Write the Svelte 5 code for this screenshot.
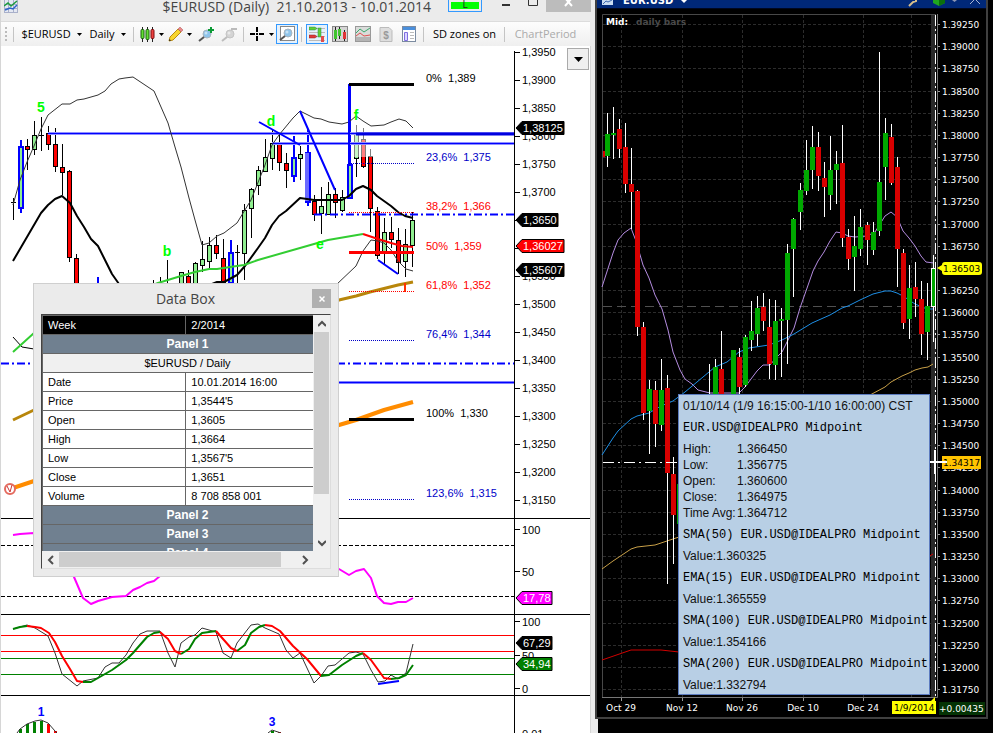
<script>
  // [slot, body top, body bottom, high, low, kind] - one slot each 7px, starting at x = 13
  const daily = [
    [0, 202, 203, 198, 220, 'k'], [1, 146, 207, 140, 213, 'b'], [2, 146, 149, 139, 170, 'r'],
    [3, 135, 149, 121, 155, 'g'], [4, 135, 136, 117, 151, 'k'], [5, 133, 144, 126, 150, 'r'],
    [6, 144, 166, 128, 172, 'r'], [7, 167, 172, 144, 195, 'r'], [8, 171, 257, 170, 262, 'r'],
    [9, 258, 300, 254, 304, 'r'], [12, 290, 310, 277, 320, 'b'], [20, 300, 301, 280, 320, 'k'],
    [21, 300, 301, 277, 320, 'k'], [22, 300, 301, 260, 320, 'k'], [24, 272, 300, 272, 300, 'g'],
    [25, 276, 300, 270, 300, 'r'], [26, 263, 300, 262, 300, 'g'], [27, 259, 265, 241, 272, 'g'],
    [28, 245, 261, 237, 268, 'g'], [29, 245, 253, 235, 259, 'r'], [30, 258, 290, 239, 295, 'r'],
    [31, 252, 282, 240, 290, 'b'], [32, 252, 253, 245, 284, 'k'], [33, 210, 253, 204, 280, 'g'],
    [34, 189, 208, 188, 238, 'g'], [35, 170, 185, 166, 195, 'g'], [36, 157, 171, 139, 172, 'g'],
    [37, 143, 158, 130, 170, 'g'], [38, 144, 162, 135, 171, 'r'], [39, 163, 170, 153, 188, 'r'],
    [40, 157, 175, 136, 182, 'b'], [41, 154, 158, 146, 180, 'g'], [42, 152, 201, 129, 206, 'b'],
    [43, 201, 214, 195, 221, 'r'], [44, 206, 213, 187, 234, 'g'], [45, 194, 214, 182, 214, 'g'],
    [46, 194, 202, 188, 218, 'r'], [47, 197, 210, 190, 212, 'g'], [48, 164, 197, 84, 199, 'b'],
    [49, 134, 158, 125, 177, 'g'], [50, 139, 166, 128, 168, 'r'], [51, 156, 208, 149, 232, 'r'],
    [52, 211, 255, 207, 259, 'r'], [53, 232, 251, 218, 264, 'g'], [54, 232, 239, 217, 248, 'r'],
    [55, 240, 262, 228, 274, 'r'], [56, 244, 261, 229, 277, 'g'], [57, 220, 245, 212, 267, 'g']
  ];
  const bodyFill = { r: '#ff0000', g: '#8fee8f', b: '#8fee8f', k: '#000' };

  const covered = ['1,3650', '1,3600'];
  const priceAxis = Array.from({ length: 17 }, (_, i) => ({
    y: Math.round(51.5 + i * 28.06),
    label: '1,' + (3950 - i * 50)
  }));

  const fib = [
    { pct: '0%', price: '1,389', y: 84, ty: 82, c: '#000', solid: true },
    { pct: '23,6%', price: '1,375', y: 163, ty: 161, c: '#0000c8' },
    { pct: '38,2%', price: '1,366', y: 212, ty: 210, c: '#ff0000' },
    { pct: '50%', price: '1,359', y: 252, ty: 250, c: '#ff0000', solid: true },
    { pct: '61,8%', price: '1,352', y: 291, ty: 289, c: '#ff0000' },
    { pct: '76,4%', price: '1,344', y: 340, ty: 338, c: '#0000c8' },
    { pct: '100%', price: '1,330', y: 419, ty: 417, c: '#000', solid: true },
    { pct: '123,6%', price: '1,315', y: 499, ty: 497, c: '#0000c8' }
  ];

  const tags = [
    { t: '1,38125', y: 128, w: 48, c: '#000' }, { t: '1,3650', y: 220, w: 42, c: '#000' },
    { t: '1,36027', y: 246, w: 48, c: '#ff0000' }, { t: '1,35607', y: 270, w: 48, c: '#000' },
    { t: '17,78', y: 598, w: 36, c: '#ff00ff' }, { t: '67,29', y: 643, w: 36, c: '#000' },
    { t: '34,94', y: 664, w: 36, c: '#008000' }
  ];

  const waves = [
    ['5', 41, 112], ['d', 271, 126], ['f', 356, 120], ['b', 167, 256], ['e', 320, 249]
  ];

  const signal = [
    ['g', '13,629 20,627 27,626'],
    ['r', '27,626 35,627 41,628 49,633 55,642 62,656 70,669 77,681 83,682'],
    ['g', '83,682 91,682 98,678 112,670 119,665 126,660 133,653 147,637 154,633 160,632'],
    ['r', '160,632 168,639 175,651 181,654'],
    ['g', '181,654 189,649 195,639 202,633 209,632 216,631'],
    ['r', '216,631 231,648 237,651'],
    ['g', '237,651 245,645 251,633 259,627 265,625'],
    ['r', '265,625 272,626 280,631 293,646 307,659 321,676'],
    ['g', '321,676 329,675 342,665 356,656 363,653'],
    ['r', '363,653 371,660 384,678 391,679'],
    ['g', '391,679 399,678 406,675 413,665']
  ];

  const histogram = [[20, 729, 'g'], [27, 724, 'g'], [34, 722, 'g'], [41, 721, 'g'], [48, 724, 'r'], [55, 731, 'r'], [272, 731, 'g'], [279, 732, 'r']];

  // [x, body top, body bottom, high, low, up]
  const mid = [
    [607, 134, 156, 113, 167, 1], [613, 133, 135, 107, 159, 1], [619, 129, 149, 119, 158, 0],
    [625, 147, 184, 123, 193, 0], [631, 184, 192, 148, 229, 0], [637, 191, 327, 190, 336, 0],
    [643, 327, 413, 322, 420, 0], [649, 389, 411, 380, 454, 1], [655, 390, 424, 381, 447, 0],
    [661, 390, 425, 359, 431, 1], [667, 388, 473, 375, 584, 0], [673, 474, 515, 457, 564, 0],
    [679, 484, 524, 484, 524, 1], [709, 400, 420, 364, 430, 1], [715, 367, 400, 359, 410, 1],
    [721, 369, 410, 331, 420, 0], [733, 350, 400, 350, 410, 1], [739, 357, 387, 348, 400, 0],
    [745, 337, 385, 335, 387, 1], [751, 331, 340, 301, 351, 1], [757, 308, 334, 296, 346, 1],
    [763, 307, 321, 293, 331, 0], [769, 327, 364, 299, 379, 0], [775, 321, 365, 300, 380, 1],
    [781, 319, 321, 308, 377, 1], [787, 253, 320, 244, 364, 1], [793, 219, 249, 218, 297, 1],
    [800, 190, 212, 183, 230, 1], [806, 170, 191, 140, 195, 1], [812, 147, 170, 126, 189, 1],
    [818, 147, 176, 132, 191, 0], [824, 178, 187, 162, 217, 0], [830, 170, 195, 136, 210, 1],
    [836, 164, 170, 151, 204, 1], [842, 163, 238, 125, 247, 0], [848, 237, 259, 229, 270, 0],
    [854, 246, 257, 216, 291, 1], [860, 227, 249, 209, 256, 1], [867, 225, 240, 222, 265, 0],
    [873, 232, 250, 222, 255, 1], [879, 182, 231, 52, 236, 1], [885, 133, 167, 118, 200, 1],
    [891, 137, 183, 124, 185, 0], [897, 167, 249, 157, 287, 0], [903, 253, 323, 249, 329, 0],
    [909, 288, 319, 265, 339, 1], [915, 287, 299, 262, 317, 0], [921, 299, 334, 281, 355, 0],
    [927, 306, 332, 283, 360, 1]
  ];
  const midAxis = Array.from({ length: 31 }, (_, i) => ({
    y: Math.round(24 + i * 22.17),
    label: (1.3925 - i * 0.0025).toFixed(5)
  })).filter((a) => a.label !== '1.36500');
  const midDates = [[621, 'Oct 29'], [682, 'Nov 12'], [742, 'Nov 26'], [803, 'Dec 10'], [863, 'Dec 24']];

  const rows = [
    ['Date', '10.01.2014 16:00'], ['Price', "1,3544'5"], ['Open', '1,3605'], ['High', '1,3664'],
    ['Low', "1,3567'5"], ['Close', '1,3651'], ['Volume', '8 708 858 001']
  ];
  const quote = [
    ['High:', '1.366450'], ['Low:', '1.356775'], ['Open:', '1.360600'],
    ['Close:', '1.364975'], ['Time Avg:', '1.364712']
  ];
  const studies = [
    ['SMA(50)', '1.360325'], ['EMA(15)', '1.365559'], ['SMA(100)', '1.354166'], ['SMA(200)', '1.332794']
  ];
</script>

{#snippet caret()}
  <svg class="caret" width="5" height="3" viewBox="0 0 5 3"><path d="M0 0h5L2.500 3z" fill="#000" /></svg>
{/snippet}

{#snippet lens(grey)}
  <circle cx="9" cy="7" r="4" fill={grey ? '#d4d4d4' : '#8fc4ea'} stroke={grey ? '#c4c4c4' : '#a9b4be'} />
  <circle cx="8" cy="6" r="1.500" fill="#fff" opacity=".5" />
  <path d="M6 10L1 14" stroke={grey ? '#bdbdbd' : '#555'} stroke-width="2" />
{/snippet}

<main class="desktop">
  <section class="trader">
    <header class="titlebar">
      <svg class="app" width="14" height="13" viewBox="0 0 14 13">
        <path d="M0 0h14v13H0z" fill="#e4e8f2" /><path d="M0 12.500h14M.5 0v13M13.500 0v13M0 8.500h14M0 4.500h14M4.500 0v13M9.500 0v13" stroke="#a9b0ca" />
        <path d="M0 6l4-3 3 3 6-5" stroke="#1c9b3c" stroke-width="1.500" fill="none" /><path d="M1 10l5-2 3 1 4-4" stroke="#2b63c9" stroke-width="1.500" fill="none" />
      </svg>
      <h1>$EURUSD (Daily)&nbsp; 21.10.2013 - 10.01.2014</h1>
      <button class="link">L</button>
      <button class="sys" aria-label="Minimize"><svg width="8" height="13"><path d="M0 5h8" stroke="#333" stroke-width="2" /></svg></button>
      <button class="sys" aria-label="Maximize"><svg width="10" height="13"><path d="M.5-2v7.500h9V-2" stroke="#333" fill="none" /></svg></button>
      <button class="close" aria-label="Close"><svg width="9" height="12"><path d="M1-2l7 8M8-2L1 6" stroke="#fff" stroke-width="2" /></svg></button>
    </header>

    <nav class="toolbar">
      <span class="grip"></span>
      <i></i>
      <button class="symbol">$EURUSD {@render caret()}</button>
      <button class="period">Daily {@render caret()}</button>
      <i></i>
      <button class="drop" aria-label="Chart type">
        <svg width="15" height="15" viewBox="0 0 15 15"><path d="M2.500 0v15M7.500 0v15M12.500 0v15" stroke="#222" /><rect x="1" y="2.500" width="3" height="9" rx="1" fill="#63e032" stroke="#185c0c" /><rect x="6" y="2.500" width="3" height="10" rx="1" fill="#63e032" stroke="#185c0c" /><rect x="11" y="2.500" width="3" height="9" rx="1" fill="#ee4040" stroke="#7b0e0e" /></svg>
        {@render caret()}
      </button>
      <button class="drop" aria-label="Draw">
        <svg width="15" height="15" viewBox="0 0 15 15"><path d="M1 14l1-4 8-8 3 3-8 8z" fill="#f8d52c" stroke="#b98a12" /><path d="M10 2l2-2 3 3-2 2z" fill="#e9888a" stroke="#a55" stroke-width=".5" /><path d="M1 14l.5-2 1.500 1.500z" fill="#222" /></svg>
        {@render caret()}
      </button>
      <button class="tool" aria-label="Zoom in"><svg width="16" height="15" viewBox="0 0 16 15">{@render lens(false)}<path d="M13 0v6M10 3h6" stroke="#0b9a35" stroke-width="2" /></svg></button>
      <button class="tool" aria-label="Zoom out" disabled><svg width="16" height="15" viewBox="0 0 16 15">{@render lens(true)}<path d="M10 2h6" stroke="#bbb" stroke-width="2" /></svg></button>
      <i></i>
      <button class="drop" aria-label="Crosshair"><svg width="15" height="15" viewBox="0 0 15 15"><path d="M7 0v5M7 9v5M0 7h5M9 7h5M6 7h2" stroke="#000" stroke-width="2" /></svg>{@render caret()}</button>
      <button class="toggle" aria-label="Data box" aria-pressed="true"><svg width="16" height="16" viewBox="0 0 16 16"><rect x="1.500" y=".5" width="14" height="14" fill="#fff" stroke="#888" />{@render lens(false)}</svg></button>
      <i></i>
      <button class="toggle" aria-label="Trade levels" aria-pressed="true"><svg width="16" height="16" viewBox="0 0 16 16"><path d="M0 2.500h16M0 6.500h16M0 10.500h16M0 14.500h16" stroke="#bbb" /><path d="M0 1h6l2 1.500L6 4H0z" fill="#63d033" stroke="#285" stroke-width=".5" /><path d="M0 9h6l2 1.500L6 12H0z" fill="#e03a3a" stroke="#822" stroke-width=".5" /><rect x="9" y="2" width="3" height="9" fill="#63d033" stroke="#285" stroke-width=".5" /><rect x="12" y="10" width="3" height="6" fill="#e34b4b" /></svg></button>
      <button class="tool" aria-label="Candles"><svg width="16" height="16" viewBox="0 0 16 16"><rect x=".5" y=".5" width="15" height="15" fill="#d5d5d5" stroke="#888" /><path d="M3.500 1v14M7.500 1v12M12.500 4v11" stroke="#222" /><rect x="2" y="4" width="3" height="9" fill="#3fc42e" /><rect x="6" y="3" width="3" height="7" fill="#3fc42e" /><rect x="11" y="6" width="3" height="7" fill="#e03636" /></svg></button>
      <button class="tool" aria-label="Lines"><svg width="16" height="16" viewBox="0 0 16 16"><rect x=".5" y=".5" width="15" height="15" fill="#d9dcda" stroke="#999" /><path d="M1 7l4-4 4 3 6-4" stroke="#3aa86a" fill="none" /><path d="M1 10l4-3 4 3 6-1" stroke="#e05050" fill="none" /><path d="M1 11h14v4H1z" fill="#b4b4b4" /></svg></button>
      <button class="tool" aria-label="Money" disabled><svg width="14" height="15" viewBox="0 0 14 15"><path d="M2 .5h8l3 3v11H1V.5z" fill="#dedede" stroke="#bbb" /><text x="7" y="12" class="dollar">$</text></svg></button>
      <button class="tool" aria-label="Layout"><svg width="14" height="16" viewBox="0 0 14 16"><rect x=".5" y=".5" width="13" height="15" fill="#fff" stroke="#7b8ba0" /><path d="M1 1h12v3H1z" fill="#4a8fdc" /><path d="M2.500 6.500h3v8h-3z" fill="#ddd6ff" stroke="#7f6fe0" /><path d="M8 6.500h4M8 9.500h4M8 12.500h4" stroke="#bbb" /></svg></button>
      <i></i>
      <button class="label">SD zones on</button>
      <i></i>
      <button class="label" disabled>ChartPeriod</button>
    </nav>

    <div class="canvas">
      <svg class="plot" viewBox="1 46 589 687" role="img" aria-label="EURUSD daily chart">
        <g fill="none" stroke-linejoin="round">
          <path d="M1 363.500H514" stroke="#0000ff" stroke-width="2" stroke-dasharray="8 3 2 3" />
          <path d="M200 382.500H514" stroke="#0000ff" stroke-width="2" />
          <polyline points="13,420 34,410 200,350 339,300 356,296 370,292 398,285 413,282" stroke="#b8860b" stroke-width="3" />
          <polyline points="13,488 34,481 200,460 339,425 356,420 370,415 384,410 413,402" stroke="#ff8c00" stroke-width="4" />
          <path d="M13 337l9 10 12 2h30" stroke="#000" />
        </g>
        <g shape-rendering="crispEdges">
          {#each daily as [i, top, bottom, high, low, kind]}
            {@const x = 13 + i * 7}
            {#if kind === 'k'}
              <path d="M{x + 0.5} {high}V{low}M{x - 2} {top + 0.5}h5" stroke="#000" />
            {:else if kind === 'b'}
              <path d="M{x + 0.5} {high}V{low}" stroke="#0000ff" stroke-width="2" />
              <rect x={x - 1.5} y={top + 0.5} width="4" height={bottom - top} fill={bodyFill[kind]} stroke="#0000ff" stroke-width="2" />
            {:else}
              <path d="M{x + 0.5} {high}V{low}" stroke="#000" />
              <rect x={x - 1.5} y={top + 0.5} width="4" height={bottom - top} fill={bodyFill[kind]} stroke="#000" />
            {/if}
          {/each}
          <rect x="354" y="118" width="20" height="39" fill="#fff" opacity=".5" />
          <path d="M305 153h4v48h-4z" fill="#6a6aff" />
        </g>
        <g fill="none" stroke-linejoin="round">
          {#each [[133, 48], [143, 272]] as [y, x]}
            <path d="M{x} {y + 0.5}H514" stroke="#8f8fff" stroke-width="3" /><path d="M{x} {y + 0.5}H514" stroke="#0000ff" />
          {/each}
          <path d="M356 134H514" stroke="#0000e0" stroke-width="3" />
          <path d="M314 214.500H514" stroke="#0000ff" stroke-width="2" stroke-dasharray="8 3 2 3" />
          <polyline class="thin" points="13,205 20,180 27,162 34,146 41,129 48,115 62,104 70,104 77,100 84,99 91,97 98,95 105,91 111,84 119,79 125,78 133,77 154,91 168,123 175,147 181,167 189,198 195,220 202,245 209,243 217,236 224,233 237,223 251,200 265,165 272,145 279,135 293,118 300,111 314,118 321,119 329,122 342,124 349,122 356,116 363,121 371,126 384,125 391,122 399,119 406,121 413,128" />
          <polyline points="13,261 27,237 41,213 48,205 55,199 62,196 70,203 77,216 84,227 91,239 98,246 105,260 112,274 119,284" stroke="#000" stroke-width="2" />
          <polyline points="212,284 217,282 224,282 237,275 245,266 258,248 265,238 272,225 279,216 286,211 300,198 307,199 314,200 342,200 349,196 356,189 363,186 371,190 377,196 391,206 398,212 405,216 413,218" stroke="#000" stroke-width="2" />
          <polyline points="13,352 34,333 158,283 181,276 195,272 209,269 217,269 230,267 244,265 258,260 300,248 328,240 363,234" stroke="#32cd32" stroke-width="2" />
          <polyline points="363,234 378,239 391,243 402,246 413,247" stroke="#ff0000" stroke-width="2" />
          <polyline class="thin" points="336,285 356,266 363,251 371,240 378,241 384,243 391,250 398,261 406,269 413,271" />
          <path d="M259 122l41 23M300 111l35 79M378 260l20 14M349 84v80" stroke="#0000ff" stroke-width="2" />
          <path d="M405 283v9" stroke="#ff3300" stroke-width="2" />
          {#each fib as f}
            {#if f.solid}
              <path d="M349 {f.y + 0.5}H414" stroke={f.c} stroke-width="3" />
            {:else}
              <path d="M349 {f.y + 0.5}H414" stroke={f.c} stroke-dasharray="1 1" />
            {/if}
          {/each}
        </g>
        {#each fib as f}<text x="426" y={f.ty} fill={f.c} xml:space="preserve">{f.pct + '  ' + f.price}</text>{/each}
        {#each waves as [t, x, y]}<text class="wave" {x} {y}>{t}</text>{/each}
        <g><circle cx="10" cy="489" r="5" fill="#fff" stroke="#e46a5e" stroke-width="2" /><path d="M7 486l3 6 2-7" stroke="#c33" fill="none" /></g>

        <g stroke="#000" shape-rendering="crispEdges" fill="none">
          <path d="M514.500 51V733M1 518.500H590M1 614.500H590M1 695.500H590" />
          <path d="M1 545.500H514M1 596.500H514" stroke-dasharray="4 2" />
          <path d="M1 635.500H514M1 651.500H514" stroke="#ff0000" />
          <path d="M1 658.500H514M1 674.500H514" stroke="#008000" />
          <path d="M515 529.500h5M515 571.500h5M515 621.500h5M515 655.500h5M515 688.500h5" />
        </g>
        {#each priceAxis as a}
          <path d="M515 {a.y + 0.5}h5" stroke="#000" />
          {#if !covered.includes(a.label)}<text x="522" y={a.y + 4}>{a.label}</text>{/if}
        {/each}
        <text x="522" y="534">100</text><text x="522" y="576">50</text>
        <text x="522" y="626">100</text><text x="522" y="660">50</text><text x="522" y="693">0</text>
        <text x="522" y="738">0,01</text>

        <g fill="none" stroke-linejoin="round">
          <polyline points="13,535 20,534 34,533 60,540 74,577 77,584 83,598 91,604 98,601 105,599 112,597 126,596 133,590 140,587 147,583 154,581 160,576 250,560 339,569 349,575 356,571 364,569 371,578 377,596 384,603 391,604 398,602 406,602 413,598" stroke="#ff00ff" stroke-width="2" />
          <polyline class="thin" points="13,629 27,625 35,628 48,636 55,653 62,674 77,686 83,681 98,678 105,667 112,663 119,663 126,655 133,643 140,634 147,631 160,631 168,653 175,667 181,643 189,637 195,635 202,628 216,632 223,653 231,658 237,643 251,625 258,624 265,628 279,634 286,650 293,658 300,653 307,668 314,683 321,676 328,666 335,665 349,653 356,652 363,654 371,670 378,682 385,681 391,675 398,679 406,673 413,644" />
          {#each signal as [c, points]}
            <polyline {points} stroke={c === 'g' ? '#008000' : '#ff0000'} stroke-width="2" />
          {/each}
          <path d="M378 684l21-3" stroke="#0000ff" stroke-width="2" />
        </g>
        {#each histogram as [x, y, c]}
          <rect x={x - 1} {y} width="3" height={733 - y} fill={c === 'g' ? '#008000' : '#ff0000'} />
        {/each}
        <polyline class="thin" fill="none" points="17,733 20,729 27,724 35,721 41,720 48,723 55,731 57,733" />
        <polyline class="thin" fill="none" points="268,733 272,730 281,733" />
        <text class="count" x="41" y="716">1</text><text class="count" x="272" y="726">3</text>

        {#each tags as t}
          <path d="M516 {t.y}l6-6.500h{t.w - 6}v13h-{t.w - 6}z" fill={t.c} stroke="#000" />
          <text x="523" y={t.y + 4} class="tag">{t.t}</text>
        {/each}
      </svg>
      <button class="menu" aria-label="Panel menu"><svg width="9" height="5"><path d="M0 0h9L4.500 5z" /></svg></button>
    </div>
  </section>

  <section class="ib">
    <header class="ibbar">
      <svg width="11" height="5" viewBox="0 0 11 5"><path d="M0 0h11v5H0z" fill="#c9dcf2" /><path d="M1 4l3-3 2 1 4-2" stroke="#3c68b0" fill="none" /></svg>
      <h2>EUR.USD</h2>
      <svg width="6" height="7"><path d="M0 0h6L3 3z" fill="#fff" /></svg>
      <span class="fill"></span>
      <svg width="9" height="7"><path d="M1 6l4-4 3-1V-1" stroke="#d8c08c" stroke-width="2" fill="none" /></svg>
      <svg class="cube" width="12" height="7"><path d="M0-4h12v7L6 6 0 3z" fill="#1fa81f" /><path d="M6-1v7l6-3v-6z" fill="#0b6f0b" /></svg>
      <svg width="5" height="4"><path d="M0 0h5L2.500 2z" fill="#8c96b5" /></svg>
      <svg class="x" width="10" height="5"><path d="M0 4l5-5 5 5" stroke="#a8b4d4" fill="none" /></svg>
    </header>
    <svg class="plot dark" viewBox="597 9 389 708" role="img" aria-label="EUR.USD midpoint chart">
      <path d="M597 9h389v708H597z" fill="#000" />
      <path d="M931 14h5v683h-5z" fill="#292929" />
      <g stroke="#2c2c2c" stroke-dasharray="3 2" shape-rendering="crispEdges">
        {#each midAxis as a}<path d="M603 {a.y + 0.5}H931" />{/each}
        <path d="M603 268.500H931" />
        {#each [...midDates, [911]] as [x]}<path d="M{x + 0.5} 15V697" />{/each}
      </g>
      <path d="M603 306.500H931" stroke="#505050" stroke-dasharray="9 5" />
      <path d="M602.500 697V14.500H936" fill="none" stroke="#484848" />
      <path d="M602 697.500H937.500V14" fill="none" stroke="#777" />
      <g fill="none">
        <polyline points="602,287 613,253 618,240 624,233 631,228 636,241 643,265 649,278 655,295 662,309 668,330 673,352 680,370 685,379 692,384 698,390 710,393 739,393 745,387 757,371 763,365 770,365 776,358 782,352 794,328 800,308 806,291 813,271 818,261 824,252 830,241 836,232 842,233 848,236 855,237 867,236 875,232 885,216 891,212 897,217 903,231 909,238 915,246 921,256 926,262 934,263" stroke="#b48ce0" />
        <polyline points="602,455 613,438 618,431 631,419 637,416 649,413 661,406 673,401 685,392 697,382 715,367 727,362 739,352 749,348 769,345 782,340 794,334 812,323 830,315 842,308 848,306 860,300 873,294 885,291 891,291 897,293 903,296 915,304 927,309 934,309" stroke="#1e8fe6" />
        <polyline points="602,569 613,561 631,549 637,547 655,545 679,537 770,470 870,395 885,387 891,382 902,376 909,373 915,370 922,368 928,367 933,364" stroke="#c8a048" />
        <polyline points="602,660 631,650 661,650 679,652 928,557 933,554" stroke="#d00000" />
      </g>
      <g shape-rendering="crispEdges">
        <path d="M603 151h2v6h-2z" fill="#d80000" />
        {#each mid as [x, top, bottom, high, low, up]}
          <path d="M{x + 0.5} {high}V{low}" stroke="#fff" />
          <rect x={x - 2} y={top} width="5" height={bottom - top} fill={up ? '#00a800' : '#d80000'} />
        {/each}
        <path d="M933.500 255v87" stroke="#fff" /><path d="M931.500 268.500h4v38h-4z" fill="#00a800" stroke="#fff" />
        <path d="M603 462.500H678" stroke="#fff" stroke-dasharray="11 4 2 4" />
        <path d="M673.500 457v10" stroke="#fff" />
        <path d="M935.500 15V697" stroke="#fff" stroke-dasharray="11 3 2 3" />
      </g>
      {#each midAxis as a}
        <path d="M938 {a.y + 0.5}h2" stroke="#999" /><text x="942" y={a.y + 4}>{a.label}</text>
      {/each}
      {#each midDates as [x, t]}
        <path d="M{x + 0.5} 698v3" stroke="#999" /><text x={x} y="711" text-anchor="middle">{t}</text>
      {/each}
      <text class="mid" x="606" y="25">Mid:</text><text class="bars" x="636" y="25">daily bars</text>
      <path d="M937 268l5-3q0-3 3-3h34q3 0 3 3v7q0 3-3 3h-34q-3 0-3-3v-1z" fill="#ffff00" />
      <text class="ink" x="943" y="272">1.36503</text>
      <path d="M942 456h39v13h-39z" fill="#ffc400" /><text class="ink" x="943" y="466">1.34317</text>
      <path d="M923 462h24M935 450v24" stroke="#fff" stroke-width="2" />
      <path d="M892 701h39l4-4v4h1v13h-44z" fill="#ffff00" /><text class="ink" x="894" y="711">1/9/2014</text>
      <path d="M939 702h46v13h-46z" fill="#043304" /><text x="939" y="712">+0.00435</text>
    </svg>
    <aside class="tip">
      <p>01/10/14 (1/9 16:15:00-1/10 16:00:00) CST</p>
      <h3>EUR.USD@IDEALPRO Midpoint</h3>
      <dl>{#each quote as [k, v]}<dt>{k}</dt><dd>{v}</dd>{/each}</dl>
      {#each studies as [name, value]}
        <h3>{name} EUR.USD@IDEALPRO Midpoint</h3>
        <p>Value:{value}</p>
      {/each}
    </aside>
  </section>

  <section class="databox">
    <header><h2>Data Box</h2><button aria-label="Close data box"><svg width="6" height="6"><path d="M.5.5l5 5M5.500.5l-5 5" stroke="#fff" stroke-width="1.500" /></svg></button></header>
    <div class="frame">
      <div class="view">
        <table>
          <thead><tr><th>Week</th><th>2/2014</th></tr></thead>
          <tbody>
            <tr class="panel"><td colspan="2">Panel 1</td></tr>
            <tr class="inst"><td colspan="2">$EURUSD / Daily</td></tr>
            {#each rows as [k, v]}<tr><td>{k}</td><td>{v}</td></tr>{/each}
            <tr class="panel"><td colspan="2">Panel 2</td></tr>
            <tr class="panel"><td colspan="2">Panel 3</td></tr>
            <tr class="panel"><td colspan="2">Panel 4</td></tr>
          </tbody>
        </table>
      </div>
      <div class="vbar">
        <svg width="8" height="17"><path d="M0 11l4-4 4 4" /></svg>
        <span></span>
        <svg width="8" height="17"><path d="M0 7l4 4 4-4" /></svg>
      </div>
      <div class="hbar">
        <svg width="17" height="17"><path d="M11 5L7 9l4 4" /></svg>
        <span></span>
        <svg width="17" height="17"><path d="M7 5l4 4-4 4" /></svg>
      </div>
    </div>
  </section>
</main>

<style>
  :global(body) { margin: 0; background: #000; }
  .desktop {
    position: relative; display: grid; grid-template-columns: 595fr 398fr; align-items: start;
    min-height: 100vh; overflow: hidden; background: #000;
    font-family: "Liberation Sans", Arial, sans-serif; font-size: 11px; color: #000;
  }
  h1, h2, h3, p, dl, dd { margin: 0; font-weight: 400; }
  button { border: 0; padding: 0; background: none; font: inherit; color: inherit; }
  svg { display: block; flex: none; }

  .trader { min-width: 0; margin-right: -3px; background: #ebebeb; border-left: 1px solid #d6d6d6; }
  .titlebar { display: flex; align-items: flex-start; height: 21px; padding: 0 7px 0 3px; color: #444; }
  .titlebar h1 { flex: 1; text-align: right; font: 14px/14px "Open Sans", sans-serif; white-space: nowrap; }
  .link { width: 34px; height: 12px; margin: 0 20px 0 17px; padding-bottom: 4px; background: #00ff00; border: 1px solid #3399ff; border-top: 0; box-shadow: inset 0 0 0 2px #ebebeb; font: 10px/8px "Open Sans", sans-serif; color: #222; }
  .sys { margin-right: 18px; }
  .sys + .sys { margin-right: 8px; }
  .close { display: flex; justify-content: center; width: 45px; height: 12px; background: #bcbcbc; }

  .toolbar { display: flex; align-items: center; height: 24px; margin-right: 8px; padding-left: 4px; border-top: 1px solid #dcdcdc; background: linear-gradient(#fdfdfd, #efefef); font: 11px/14px "Open Sans", sans-serif; white-space: nowrap; overflow: hidden; }
  .toolbar i { width: 1px; height: 15px; margin: 0 4px 0 3px; background: #c4c4c4; flex: none; }
  .toolbar button { display: flex; align-items: center; justify-content: center; flex: none; height: 22px; }
  .toolbar button:disabled { color: #aaa; }
  .grip { width: 2px; height: 14px; margin-right: 3px; background: repeating-linear-gradient(#bbb 0 2px, transparent 2px 4px); }
  .caret { margin-left: 4px; }
  .toolbar .symbol { width: 67px; }
  .toolbar .period { width: 45px; }
  .symbol .caret, .period .caret { margin-left: 6px; }
  .toolbar .drop { width: 28px; }
  .toolbar .tool { width: 23px; }
  .toolbar .toggle { width: 22px; height: 20px; border: 1px solid #3399ff; background: #e6f1fb; }
  .toolbar .label { width: 73px; }
  .dollar { font: bold 10px "Liberation Sans", sans-serif; fill: #999; text-anchor: middle; }

  .canvas { position: relative; margin-right: 7px; background: #fff; border-right: 1px solid #d6d6d6; }
  .plot { width: 100%; height: auto; font-size: 11px; }
  .plot .thin { stroke: #333; stroke-width: 1; }
  .plot .wave { fill: #00ff00; font-size: 14px; font-weight: 700; text-anchor: middle; }
  .plot .count { fill: #0000ff; font-size: 12px; font-weight: 700; text-anchor: middle; }
  .plot .tag { fill: #fff; }
  .menu { position: absolute; top: 2px; right: 1px; display: flex; align-items: center; justify-content: center; width: 22px; height: 22px; border: 1px solid #aaa; background: #f0f0f0; }

  .ib { position: relative; margin-right: 5px; border: 2px solid #404040; border-top: 0; background: #000; }
  .ibbar { display: flex; align-items: flex-start; height: 8px; padding: 0 6px 0 5px; background: #002878; border-bottom: 1px solid #000820; overflow: hidden; }
  .ibbar h2 { margin: -5px 8px 0 10px; color: #fff; font: bold 10px/11px "DejaVu Sans", sans-serif; }
  .ibbar .fill { flex: 1; }
  .ibbar .cube { margin: 0 7px 0 16px; }
  .ibbar .x { margin-left: 13px; }
  .dark { font: 9px "DejaVu Sans", sans-serif; fill: #fff; }
  .dark .mid { font-weight: 700; }
  .dark .bars { font-weight: 700; fill: #4a4a4a; }
  .dark .ink { fill: #000; }

  .tip { position: absolute; top: 394px; left: 81px; box-sizing: border-box; width: 252px; height: 301px; padding: 1px 0 0 4px; border: 1px solid #5c7cc0; background: #b8cfe5; font-size: 12px; white-space: nowrap; color: #111; }
  .tip p, .tip h3 { height: 22px; line-height: 21px; font-size: 12px; }
  .tip h3 { height: 21px; font-family: "Liberation Mono", monospace; color: #000; }
  .tip dl { display: grid; grid-template-columns: 54px 1fr; grid-auto-rows: 16px; line-height: 16px; padding: 2px 0 4px; }

  .databox { position: absolute; top: 283px; left: 33px; box-sizing: border-box; width: 306px; padding: 0 7px 7px; border: 1px solid #cfcfcf; background: #ebebeb; }
  .databox header { display: flex; height: 30px; }
  .databox h2 { flex: 1; padding-left: 18px; text-align: center; font: 14px/30px "Open Sans", sans-serif; color: #444; }
  .databox header button { display: flex; align-items: center; justify-content: center; width: 19px; height: 19px; margin-top: 5px; background: #b0b0b0; }
  .frame { display: grid; grid-template-columns: 1fr 17px; grid-template-rows: 236px 17px; border: 1px solid #ddd; border-top-color: #444; border-left-color: #444; background: #f0f0f0; }
  .view { overflow: hidden; background: #f0f0f0; }
  table { width: 100%; border-collapse: collapse; table-layout: fixed; }
  th, td { box-sizing: border-box; height: 19px; padding: 0 5px; border: 1px solid #666; border-right: 0; background: #fff; text-align: left; font-weight: 400; line-height: 17px; }
  th:first-child { width: 53%; }
  th { background: #000; color: #fff; }
  .panel td { background: #708090; color: #fff; font-size: 12px; font-weight: 700; text-align: center; padding-left: 24px; }
  .inst td { background: #f0f0f0; text-align: center; padding-left: 24px; }
  .vbar { display: flex; flex-direction: column; align-items: center; justify-content: space-between; height: 236px; }
  .vbar span { width: 15px; height: 162px; margin-bottom: auto; background: #cdcdcd; }
  .hbar { display: flex; align-items: center; grid-column: 1 / 2; }
  .hbar span { width: 222px; height: 15px; margin-right: auto; background: #cdcdcd; }
  .vbar path, .hbar path { fill: none; stroke: #505050; stroke-width: 2; }
</style>
